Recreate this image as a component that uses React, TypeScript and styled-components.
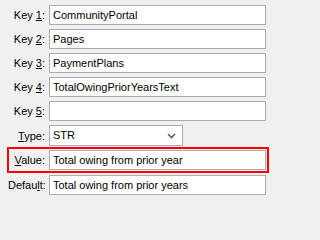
import React from 'react';
import styled, {createGlobalStyle} from 'styled-components';

const GlobalStyle = createGlobalStyle`
  html, body {
    margin: 0;
    padding: 0;
    background: #f0f0f0;
  }
  body {
    font-family: "Liberation Sans", Arial, sans-serif;
    font-size: 11px;
    color: #000;
  }
`;

const Form = styled.div`
  width: 271px;
  height: 202px;
  box-sizing: border-box;
  padding: 5px 0 0 8px;
  display: flex;
  flex-direction: column;
  gap: 4px;
`;

const Row = styled.div<{$highlight?: boolean}>`
  display: grid;
  grid-template-columns: 37px 217px;
  column-gap: 4px;
  align-items: center;
  ${({$highlight}) =>
    $highlight &&
    `
    width: 260px;
    padding: 2px 0;
    margin: -2px 0 -1px;
    outline: 2px solid #ff0000;
    outline-offset: -1px;
  `}
`;

const Label = styled.label`
  text-align: right;
  white-space: nowrap;
  line-height: 20px;

  u {
    text-decoration: underline;
    text-underline-offset: 1px;
  }
`;

const TextBox = styled.div`
  height: 20px;
  box-sizing: border-box;
  border: 1px solid #abadb3;
  background: #fff;
  padding: 0 3px;
  line-height: 18px;
  white-space: nowrap;
  overflow: hidden;
`;

const Select = styled(TextBox)<{$width: number}>`
  width: ${({$width}) => $width}px;
  height: 21px;
  line-height: 19px;
  display: flex;
  align-items: center;
  justify-content: space-between;
  padding-right: 6px;
`;

const Chevron = () => (
  <svg width="9" height="6" viewBox="0 0 9 6">
    <path d="M1 1 L4.5 4.5 L8 1" fill="none" stroke="#606060" strokeWidth="1.6" />
  </svg>
);

const keys = [
  {n: '1', v: 'CommunityPortal'},
  {n: '2', v: 'Pages'},
  {n: '3', v: 'PaymentPlans'},
  {n: '4', v: 'TotalOwingPriorYearsText'},
  {n: '5', v: ''}
];

export default function App() {
  return (
    <>
      <GlobalStyle />
      <Form>
        {keys.map(k => (
          <Row key={k.n}>
            <Label>
              Key <u>{k.n}</u>:
            </Label>
            <TextBox>{k.v}</TextBox>
          </Row>
        ))}
        <Row>
          <Label>
            <u>T</u>ype:
          </Label>
          <Select $width={134}>
            <span>STR</span>
            <Chevron />
          </Select>
        </Row>
        <Row $highlight>
          <Label>
            <u>V</u>alue:
          </Label>
          <TextBox>Total owing from prior year</TextBox>
        </Row>
        <Row>
          <Label>
            Defau<u>l</u>t:
          </Label>
          <TextBox>Total owing from prior years</TextBox>
        </Row>
      </Form>
    </>
  );
}
